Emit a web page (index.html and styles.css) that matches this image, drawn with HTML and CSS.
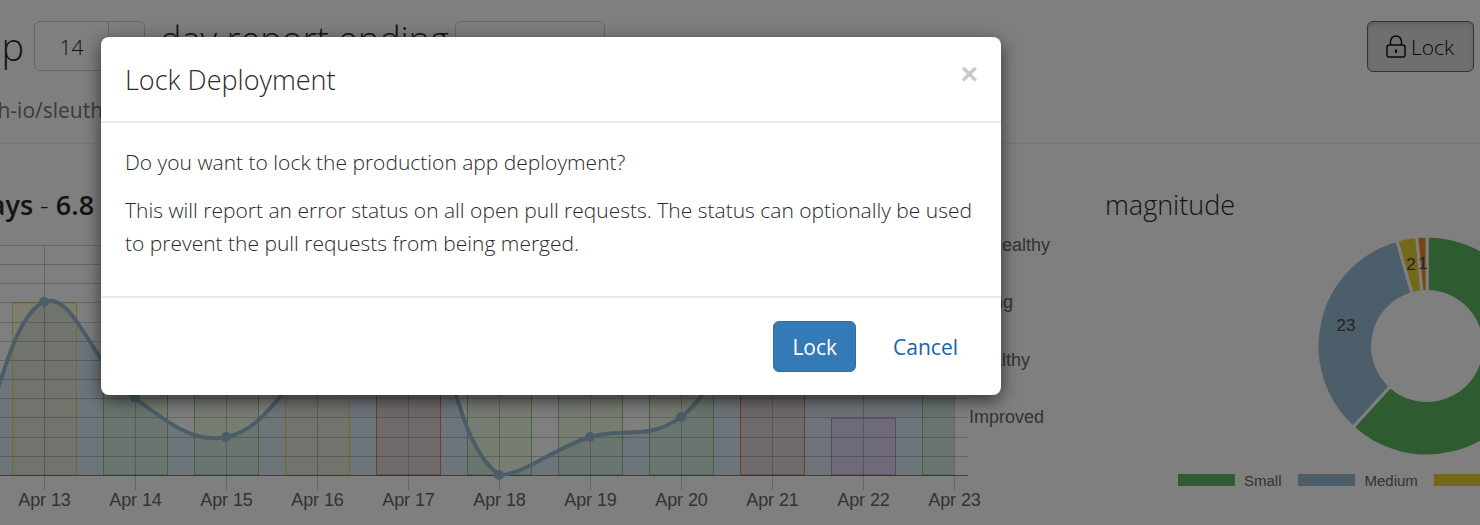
FILE: index.html
```html
<!DOCTYPE html>
<html>
<head>
<title>Deployment report</title>
<link rel="stylesheet" href="styles.css">
</head>
<body>
<div class="page">
    <div class="toolbar">
        <div class="app-name">app</div>
        <div class="days-group">
            <div class="days-input">14</div>
            <div class="days-addon"></div>
        </div>
        <div class="report-label">day report ending</div>
        <div class="date-input"></div>
        <button class="btn btn-lock">
            <svg class="lock-icon" width="20" height="23" viewBox="0 0 20 23">
                <path d="M4.5 10V6.5a5.5 5.5 0 0 1 11 0V10" fill="none" stroke="#111" stroke-width="1.5"/>
                <rect x="1" y="10" width="18" height="12" rx="2" fill="none" stroke="#111" stroke-width="1.5"/>
                <path d="M10 14.5v3.5" stroke="#111" stroke-width="2"/>
            </svg>
            <span class="lock-text">Lock</span>
        </button>
    </div>
    <div class="repo-name">sleuth-io/sleuth</div>
    <div class="rule"></div>
    <div class="charts">
        <div class="chart-main">
            <h3 class="chart-title title-health"><b>days</b> - <b>6.8</b></h3>
            <svg class="chart-svg" width="1066" height="295" viewBox="0 230 1066 295">
                <path class="line-fill" d="M-47 475C-11 475 1 320 44 302C73.500 289.500 93.300 367 135 398C166 421 193 444 226 437C266 429 279 388 317 360C352 334 382 286 408 302C455 332 451 439 499 475C524 475 552.500 449 590 437C625 426 647 442 681 417C720 388 745 300 772 302C800 304 830 370 863 360C900 350 930 310 954 302V475H-47Z"/>
                <g class="bars">
                    <rect class="bar bar-yellow" x="12.500" y="303" width="64" height="172"/>
                    <rect class="bar bar-green" x="103.500" y="303" width="64" height="172"/>
                    <rect class="bar bar-green" x="194.500" y="303" width="64" height="172"/>
                    <rect class="bar bar-yellow" x="285.500" y="303" width="64" height="172"/>
                    <rect class="bar bar-red" x="376.500" y="245" width="64" height="230"/>
                    <rect class="bar bar-green" x="467.500" y="303" width="64" height="172"/>
                    <rect class="bar bar-green" x="558.500" y="303" width="64" height="172"/>
                    <rect class="bar bar-green" x="649.500" y="303" width="64" height="172"/>
                    <rect class="bar bar-red" x="740.500" y="245" width="64" height="230"/>
                    <rect class="bar bar-purple" x="831.500" y="418" width="64" height="57"/>
                    <path class="bar bar-green" d="M954 303H922.500V475H954"/>
                </g>
                <g class="grid">
                    <path d="M0 245.500H968M0 264.500H968M0 283.500H968M0 302.500H968M0 322.500H968M0 341.500H968M0 360.500H968M0 379.500H968M0 398.500H968M0 417.500H968M0 437.500H968M0 456.500H968"/>
                    <path d="M44.500 245V490M135.500 245V490M226.500 245V490M317.500 245V490M408.500 245V490M499.500 245V490M590.500 245V490M681.500 245V490M772.500 245V490M863.500 245V490M954.500 245V490"/>
                </g>
                <path class="axis" d="M0 475.500H968"/>
                <path class="line" d="M-47 475C-11 475 1 320 44 302C73.500 289.500 93.300 367 135 398C166 421 193 444 226 437C266 429 279 388 317 360C352 334 382 286 408 302C455 332 451 439 499 475C524 475 552.500 449 590 437C625 426 647 442 681 417C720 388 745 300 772 302C800 304 830 370 863 360C900 350 930 310 954 302"/>
                <g class="dots">
                    <circle cx="44" cy="302" r="5"/>
                    <circle cx="135" cy="398" r="5"/>
                    <circle cx="226" cy="437" r="5"/>
                    <circle cx="499" cy="475" r="5"/>
                    <circle cx="590" cy="437" r="5"/>
                    <circle cx="681" cy="417" r="5"/>
                </g>
                <g class="tick-x">
                    <text x="44.500" y="506">Apr 13</text>
                    <text x="135.500" y="506">Apr 14</text>
                    <text x="226.500" y="506">Apr 15</text>
                    <text x="317.500" y="506">Apr 16</text>
                    <text x="408.500" y="506">Apr 17</text>
                    <text x="499.500" y="506">Apr 18</text>
                    <text x="590.500" y="506">Apr 19</text>
                    <text x="681.500" y="506">Apr 20</text>
                    <text x="772.500" y="506">Apr 21</text>
                    <text x="863.500" y="506">Apr 22</text>
                    <text x="954.500" y="506">Apr 23</text>
                </g>
                <g class="tick-y">
                    <text x="969" y="251">Unhealthy</text>
                    <text x="969" y="308">Ailing</text>
                    <text x="969" y="366">Healthy</text>
                    <text x="969" y="423">Improved</text>
                </g>
            </svg>
        </div>
        <div class="chart-side">
            <h3 class="chart-title title-magnitude">magnitude</h3>
            <svg class="donut" width="414" height="240" viewBox="1066 230 414 240">
                <path class="slice slice-small" d="M1427 236A110 110 0 1 1 1352.900 427.300L1390.300 386.300A54.500 54.500 0 1 0 1427 291.500Z"/>
                <path class="slice slice-medium" d="M1352.900 427.300A110 110 0 0 1 1396.900 240.200L1412.100 293.600A54.500 54.500 0 0 0 1390.300 386.300Z"/>
                <path class="slice slice-large" d="M1396.900 240.200A110 110 0 0 1 1416.800 236.500L1422 291.700A54.500 54.500 0 0 0 1412.100 293.600Z"/>
                <path class="slice slice-xl" d="M1416.800 236.500A110 110 0 0 1 1427 236V291.500A54.500 54.500 0 0 0 1422 291.700Z"/>
                <g class="slice-label">
                    <text x="1346" y="331">23</text>
                    <text x="1411" y="270">2</text>
                    <text x="1423" y="269">1</text>
                </g>
            </svg>
            <div class="legend">
                <span class="swatch swatch-small"></span><span class="legend-text">Small</span>
                <span class="swatch swatch-medium"></span><span class="legend-text">Medium</span>
                <span class="swatch swatch-large"></span><span class="legend-text">Large</span>
            </div>
        </div>
    </div>
</div>

<div class="backdrop"></div>

<div class="modal">
    <div class="modal-header">
        <span class="close">&times;</span>
        <h4 class="modal-title">Lock Deployment</h4>
    </div>
    <div class="modal-body">
        <p>Do you want to lock the production app deployment?</p>
        <p>This will report an error status on all open pull requests. The status can optionally be used to prevent the pull requests from being merged.</p>
    </div>
    <div class="modal-footer">
        <button class="btn btn-primary">Lock</button>
        <a class="btn btn-link">Cancel</a>
    </div>
</div>
</body>
</html>
```

FILE: styles.css
```css
html, body {
    margin: 0;
    height: 525px;
    overflow: hidden;
}
body {
    position: relative;
    width: 1480px;
    background-color: #fff;
    font-family: "Open Sans", "Liberation Sans", sans-serif;
    font-weight: 300;
    font-size: 21px;
    color: #2a2a2a;
}

/* page behind the dialog */
.toolbar {
    display: flex;
    align-items: flex-start;
    height: 50px;
    padding-top: 21px;
}
.app-name {
    width: 24px;
    margin-right: 10px;
    overflow: hidden;
    direction: rtl;
    font-size: 38px;
    line-height: 50px;
}
.days-group {
    display: flex;
    width: 111px;
    height: 50px;
    box-sizing: border-box;
    border: 1px solid #ccc;
    border-radius: 6px;
}
.days-input {
    width: 73px;
    line-height: 50px;
    text-align: center;
    font-size: 21px;
    color: #222;
}
.days-addon {
    flex: 1;
    border-left: 1px solid #ccc;
}
.report-label {
    width: 285px;
    margin-top: -6px;
    margin-left: 15px;
    font-size: 36px;
    line-height: 50px;
    white-space: nowrap;
}
.date-input {
    width: 150px;
    height: 50px;
    box-sizing: border-box;
    margin-left: 10px;
    border: 1px solid #ccc;
    border-radius: 6px;
}
.btn {
    box-sizing: border-box;
    height: 51px;
    padding: 0 18px;
    border: 1px solid transparent;
    border-radius: 6px;
    font-family: inherit;
    font-weight: 400;
    font-size: 21px;
    line-height: 51px;
    display: inline-block;
}
.btn-lock {
    display: flex;
    align-items: center;
    gap: 5px;
    margin-left: auto;
    margin-right: 6px;
    width: 107px;
    background-color: #dedede;
    border: 1px solid #666;
    box-shadow: inset 0 3px 5px rgba(0, 0, 0, .125);
    color: #111;
    font-weight: 300;
}
.lock-text {
    margin-top: 2px;
}
.repo-name {
    margin-left: -50px;
    margin-top: 24px;
    line-height: 30px;
    font-weight: 400;
    color: #777;
    white-space: nowrap;
}
.rule {
    height: 1px;
    margin-top: 18px;
    background-color: #eee;
}
.charts {
    display: flex;
}
.chart-main {
    width: 1066px;
}
.chart-side {
    width: 414px;
}
.chart-title {
    margin: 0;
    height: 86px;
    padding-top: 43px;
    box-sizing: border-box;
    font-size: 27px;
    font-weight: 300;
    line-height: 36px;
    white-space: nowrap;
}
.chart-title b {
    font-weight: 600;
}
.title-health {
    margin-left: -27px;
}
.title-magnitude {
    margin-left: 39px;
}
.chart-svg, .donut {
    display: block;
}

/* chart */
.bar {
    stroke-width: 1;
}
.bar-yellow {
    fill: rgba(240, 230, 120, .2);
    stroke: rgba(230, 205, 70, .8);
}
.bar-green {
    fill: rgba(200, 240, 160, .25);
    stroke: rgba(92, 184, 92, .7);
}
.bar-red {
    fill: rgba(255, 130, 100, .2);
    stroke: rgba(229, 96, 79, .8);
}
.bar-purple {
    fill: rgba(220, 130, 220, .2);
    stroke: rgba(176, 124, 192, .8);
}
.line-fill {
    fill: rgba(120, 170, 210, .25);
}
.grid path {
    fill: none;
    stroke: rgba(0, 0, 0, .2);
}
.axis {
    stroke: rgba(0, 0, 0, .5);
}
.line {
    fill: none;
    stroke: #97bbcd;
    stroke-width: 4;
}
.dots circle {
    fill: #97bbcd;
}
.tick-x text, .tick-y text, .slice-label text {
    font-family: "Liberation Sans", Arial, sans-serif;
    font-size: 18px;
    font-weight: 400;
    fill: #666;
}
.tick-x text, .slice-label text {
    text-anchor: middle;
}
.tick-x text {
    letter-spacing: -.1px;
}
.slice-label text {
    font-size: 17px;
    fill: #444;
}
.slice {
    stroke: #fff;
    stroke-width: 3;
}
.slice-small, .swatch-small {
    fill: #5cb860;
    background-color: #5cb860;
}
.slice-medium, .swatch-medium {
    fill: #97bdd4;
    background-color: #97bdd4;
}
.slice-large, .swatch-large {
    fill: #e8d230;
    background-color: #e8d230;
}
.slice-xl {
    fill: #f08a24;
}
.legend {
    display: flex;
    align-items: center;
    height: 20px;
    padding-left: 112px;
    font-family: "Liberation Sans", Arial, sans-serif;
    font-weight: 400;
    font-size: 15px;
    color: #666;
    white-space: nowrap;
}
.swatch {
    flex: none;
    width: 57px;
    height: 12px;
    margin-right: 9px;
}
.swatch-medium {
    margin-right: 10px;
}
.legend-text {
    margin-right: 16px;
}

/* dialog */
.backdrop {
    position: absolute;
    top: 0;
    left: 0;
    right: 0;
    bottom: 0;
    background-color: #000;
    opacity: .5;
}
.modal {
    position: absolute;
    top: 37px;
    left: 101px;
    width: 900px;
    height: 358px;
    box-sizing: border-box;
    background-color: #fff;
    border-radius: 8px;
    box-shadow: 0 5px 18px rgba(0, 0, 0, .6);
}
.modal-header {
    height: 86px;
    box-sizing: border-box;
    padding: 0 24px;
    border-bottom: 2px solid #e8e8e8;
}
.modal-title {
    margin: 0;
    font-size: 27px;
    font-weight: 300;
    line-height: 86px;
}
.close {
    float: right;
    margin-top: 20px;
    margin-right: -1px;
    font-family: "Liberation Sans", Arial, sans-serif;
    font-size: 30px;
    font-weight: 700;
    line-height: 34px;
    color: #c9c9c9;
}
.modal-body {
    height: 175px;
    box-sizing: border-box;
    padding: 23px 24px 0;
    border-bottom: 2px solid #e8e8e8;
}
.modal-body p {
    margin: 0 0 15px;
    line-height: 33px;
}
.modal-footer {
    display: flex;
    justify-content: flex-end;
    gap: 18px;
    padding: 23px 24px 0;
}
.btn-primary {
    background-color: #337ab7;
    border-color: #2e6da4;
    color: #fff;
}
.btn-link {
    color: #1a62ab;
}
```
